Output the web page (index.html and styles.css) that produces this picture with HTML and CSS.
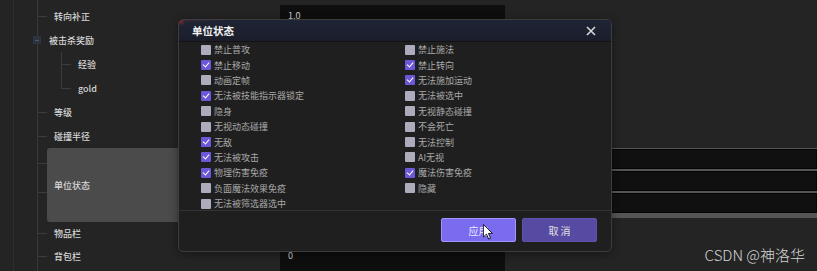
FILE: index.html
```html
<!DOCTYPE html>
<html lang="zh-CN">
<head>
<meta charset="UTF-8">
<title>单位状态</title>
<link rel="stylesheet" href="styles.css">
</head>
<body>
<div class="page">
    <div class="tree">
        <div class="row">
            <div class="name"><i class="tick"></i><span>转向补正</span></div>
            <div class="value"><div class="input">1.0</div></div>
        </div>
        <div class="row">
            <div class="name group"><i class="fold"></i><span>被击杀奖励</span></div>
        </div>
        <div class="sub">
            <div class="row">
                <div class="name"><i class="tick"></i><span>经验</span></div>
            </div>
            <div class="row">
                <div class="name"><i class="tick"></i><span>gold</span></div>
            </div>
        </div>
        <div class="row">
            <div class="name"><i class="tick"></i><span>等级</span></div>
        </div>
        <div class="row">
            <div class="name"><i class="tick"></i><span>碰撞半径</span></div>
        </div>
        <div class="row tall">
            <div class="name selected"><div class="hl">单位状态</div></div>
            <div class="value">
                <div class="slots">
                    <div class="slot"></div>
                    <div class="slot"></div>
                    <div class="slot"></div>
                </div>
            </div>
        </div>
        <div class="row short">
            <div class="name"><i class="tick"></i><span>物品栏</span></div>
        </div>
        <div class="row">
            <div class="name"><i class="tick"></i><span>背包栏</span></div>
            <div class="value"><div class="input low">0</div></div>
        </div>
    </div>

    <!-- modal -->
    <div class="dialog">
        <div class="dialog-head">
            <span class="dialog-title">单位状态</span>
            <svg class="close" width="10" height="10" viewBox="0 0 10 10">
                <path d="M1 1 L9 9 M9 1 L1 9" stroke="#d8d8d8" stroke-width="1.6" fill="none"/>
            </svg>
        </div>
        <div class="dialog-body">
            <div class="col">
                <div class="opt"><i class="box"></i>禁止普攻</div>
                <div class="opt"><i class="box on"></i>禁止移动</div>
                <div class="opt"><i class="box"></i>动画定帧</div>
                <div class="opt"><i class="box on"></i>无法被技能指示器锁定</div>
                <div class="opt"><i class="box"></i>隐身</div>
                <div class="opt"><i class="box"></i>无视动态碰撞</div>
                <div class="opt"><i class="box on"></i>无敌</div>
                <div class="opt"><i class="box on"></i>无法被攻击</div>
                <div class="opt"><i class="box on"></i>物理伤害免疫</div>
                <div class="opt"><i class="box"></i>负面魔法效果免疫</div>
                <div class="opt"><i class="box"></i>无法被筛选器选中</div>
            </div>
            <div class="col">
                <div class="opt"><i class="box"></i>禁止施法</div>
                <div class="opt"><i class="box on"></i>禁止转向</div>
                <div class="opt"><i class="box on"></i>无法施加运动</div>
                <div class="opt"><i class="box"></i>无法被选中</div>
                <div class="opt"><i class="box"></i>无视静态碰撞</div>
                <div class="opt"><i class="box"></i>不会死亡</div>
                <div class="opt"><i class="box"></i>无法控制</div>
                <div class="opt"><i class="box"></i>AI无视</div>
                <div class="opt"><i class="box on"></i>魔法伤害免疫</div>
                <div class="opt"><i class="box"></i>隐藏</div>
            </div>
        </div>
        <div class="dialog-foot">
            <button class="btn apply">应用</button>
            <button class="btn cancel">取 消</button>
        </div>
    </div>

    <svg class="cursor" width="10" height="16" viewBox="0 0 12 19">
        <path d="M0.5 0.5 L0.5 15.5 L4.2 12 L6.8 18 L9 17 L6.5 11.2 L11.3 11.2 Z" fill="#fff" stroke="#000" stroke-width="1"/>
    </svg>

    <div class="watermark">CSDN @神洛华</div>
</div>
</body>
</html>
```

FILE: styles.css
```css
body {
    margin: 0;
    padding: 0;
    background-color: #242424;
    font-family: "Noto Sans CJK SC", "Noto Sans", sans-serif;
    overflow: hidden;
}

.page {
    position: relative;
    width: 817px;
    height: 271px;
    overflow: hidden;
}

/* property tree */
.tree {
    padding-top: 4px;
    height: 271px;
    box-sizing: border-box;
    background:
        linear-gradient(#2e2e2e, #2e2e2e) no-repeat 13px 0 / 1px 100%,
        linear-gradient(#393939, #393939) no-repeat 37px 0 / 1px 100%;
}

.row {
    display: flex;
    height: 24px;
}

.row.tall {
    height: 74px;
}

.row.short {
    height: 22px;
}

.name {
    width: 280px;
    flex-shrink: 0;
    box-sizing: border-box;
    display: flex;
    align-items: center;
    padding-left: 37px;
    font-size: 9px;
    font-weight: 500;
    color: #d6d6d6;
}

.tick {
    width: 10px;
    height: 1px;
    background-color: #3c3c3c;
    margin-right: 7px;
}

.name.group {
    padding-left: 33px;
}

.fold {
    width: 8px;
    height: 8px;
    margin-right: 8px;
    background-color: #2d333f;
    position: relative;
}

.fold::after {
    content: "";
    position: absolute;
    left: 2px;
    top: 4px;
    width: 4px;
    height: 1px;
    background-color: #4c5566;
}

.sub {
    background: linear-gradient(#3c3c3c, #3c3c3c) no-repeat 61px 0 / 1px 36px;
}

.sub .name {
    padding-left: 61px;
}

.name.selected {
    padding-left: 47px;
    align-items: stretch;
    background:
        linear-gradient(#3c3c3c, #3c3c3c) no-repeat 37px 15px / 10px 1px,
        linear-gradient(#3c3c3c, #3c3c3c) no-repeat 37px 44px / 10px 1px;
}

.hl {
    flex: 1;
    display: flex;
    align-items: center;
    padding-left: 7px;
    background-color: #4b4b4b;
    border-radius: 3px;
}

.value {
    flex: 1;
}

.input {
    width: 225px;
    height: 22px;
    margin-top: 1px;
    box-sizing: border-box;
    padding-left: 8px;
    background-color: #0e0e0e;
    color: #cfcfcf;
    font-size: 9px;
    line-height: 22px;
}

.input.low {
    margin-top: 5px;
    line-height: 14px;
}

.slots {
    display: flex;
    flex-direction: column;
    gap: 2px;
    padding: 1px 0 5px;
    background-color: #555;
}

.slot {
    height: 20px;
    box-sizing: border-box;
    background-color: #101010;
    border: 1px solid #050505;
}

/* unit state dialog */
.dialog {
    position: absolute;
    left: 178px;
    top: 19px;
    width: 434px;
    height: 233px;
    box-sizing: border-box;
    border: 1px solid #3d3d3d;
    border-radius: 5px;
    background-color: #1f1f1f;
    overflow: hidden;
    box-shadow: 0 2px 10px rgba(0, 0, 0, 0.4);
}

.dialog-head {
    height: 21px;
    display: flex;
    align-items: center;
    justify-content: space-between;
    padding: 0 15px 0 13px;
    border-bottom: 1px solid #121212;
    background:
        radial-gradient(circle at 2px 2px, rgba(170, 50, 50, 0.6), transparent 4px),
        radial-gradient(ellipse at 0 0, rgba(110, 45, 50, 0.45), transparent 45px),
        linear-gradient(#1f2436, #1a1e2b);
}

.dialog-title {
    color: #f0f0f0;
    font-size: 10.5px;
    font-weight: bold;
}

.dialog-body {
    display: flex;
    height: 168px;
    padding-left: 22px;
    overflow: hidden;
}

.col {
    width: 204px;
}

.opt {
    height: 15.4px;
    display: flex;
    align-items: center;
    font-size: 9px;
    color: #a9a9a9;
    white-space: nowrap;
}

.box {
    width: 10px;
    height: 10px;
    margin-right: 3px;
    box-sizing: border-box;
    background-color: #acacbc;
    border-radius: 1px;
    position: relative;
}

.box.on {
    background-color: #6a58d8;
}

.box.on::after {
    content: "";
    position: absolute;
    left: 3px;
    top: 1px;
    width: 3px;
    height: 5px;
    border: solid #fff;
    border-width: 0 1.5px 1.5px 0;
    transform: rotate(40deg);
}

.dialog-foot {
    height: 40px;
    border-top: 1px solid #333;
    display: flex;
    justify-content: flex-end;
    align-items: flex-start;
    gap: 6px;
    padding: 7px 14px 0 0;
    box-sizing: border-box;
}

.btn {
    width: 75px;
    height: 24px;
    border-radius: 2px;
    font-family: "Noto Sans CJK SC", sans-serif;
    font-size: 10px;
    cursor: pointer;
    outline: none;
}

.apply {
    background-color: #7a6bef;
    border: 1px solid #a195ff;
    color: #ece9ff;
}

.cancel {
    background-color: #574aa2;
    border: 1px solid #5f52ad;
    color: #e0e0e0;
}

.close {
    display: block;
}

.cursor {
    position: absolute;
    left: 483px;
    top: 224px;
}

.watermark {
    position: absolute;
    right: 12px;
    bottom: 6px;
    font-size: 15px;
    font-weight: 300;
    color: #d4d4d4;
}
```
